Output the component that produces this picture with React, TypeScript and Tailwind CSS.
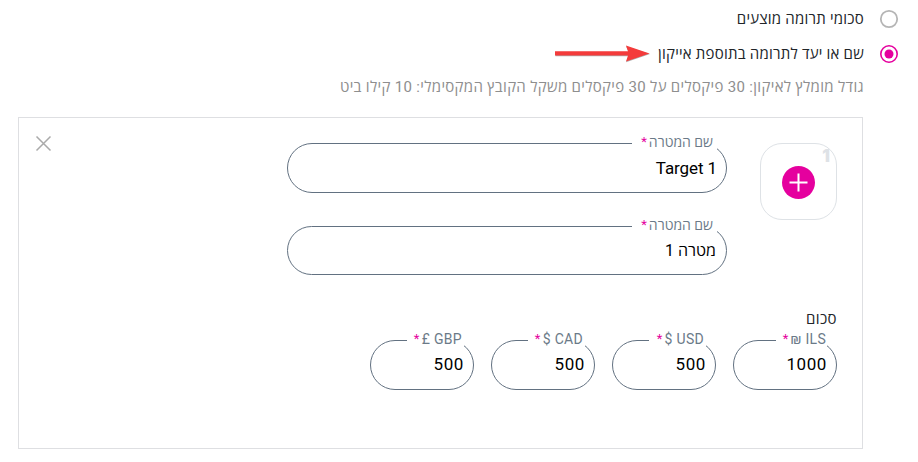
import type { ReactNode } from 'react';

const PINK = 'text-[#e5009e]';

function Radio({ checked }: { checked?: boolean }) {
  return (
    <svg className={`h-5 w-5 shrink-0 ${checked ? PINK : 'text-[#b5b5b5]'}`} viewBox="0 0 20 20" fill="none">
      <circle cx="10" cy="10" r="8.2" stroke="currentColor" strokeWidth={checked ? 1.6 : 1.8} />
      {checked && <circle cx="10" cy="10" r="4.5" fill="currentColor" />}
    </svg>
  );
}

function Arrow() {
  return (
    <svg className="h-5 w-24" viewBox="0 0 96 20">
      <path d="M0.5 8H73.5L71 2.2L95 10L71 18.2L73.5 12.2H0.5Z" fill="#777" opacity="0.6" />
      <path d="M0 7.2H73L71 1.5L94.5 9.5L71 17.5L73 11.6H0Z" fill="#f43b3b" />
    </svg>
  );
}

interface FieldProps {
  label: ReactNode;
  value: string;
  className: string;
  notch: string;
  valueClass: string;
}

function Field({ label, value, className, notch, valueClass }: FieldProps) {
  return (
    <div className={`relative flex items-center rounded-[25px] border border-[#627181] ${className}`}>
      {/* Floating label sits over the outline */}
      <div className={`absolute -top-[10px] right-[9px] flex h-4 items-center gap-[2px] bg-white text-[14px] whitespace-nowrap text-[#6b7a88] ${notch}`}>
        <span>{label}</span>
        <span className={`text-[13px] ${PINK}`}>*</span>
      </div>
      <span dir="auto" className={`leading-5 text-black ${valueClass}`}>{value}</span>
    </div>
  );
}

const currencies = [
  { code: 'ILS', sign: '₪', value: '1000', notch: 'w-[51px] pr-[1px] tracking-[0.3px]' },
  { code: 'USD', sign: '$', value: '500', notch: 'w-[57px] pr-[2px] tracking-[0.3px]' },
  { code: 'CAD', sign: '$', value: '500', notch: 'w-[57px] pr-[2px] tracking-[0.3px]' },
  { code: 'GBP', sign: '£', value: '500', notch: 'w-[57px] pr-[2px] tracking-[0.3px]' },
];

export default function App() {
  return (
    <div dir="rtl" className="h-[462px] w-[918px] overflow-hidden bg-white pt-[9px] font-['Roboto','Open_Sans',sans-serif] text-[#212529]">
      <div className="flex h-5 items-center gap-[15px] pr-[19px] text-[15px] tracking-[0.22px]">
        <Radio />
        <span>סכומי תרומה מוצעים</span>
      </div>

      <div className="mt-[15px] flex h-5 items-center pr-[19px] text-[15px] tracking-[0.23px]">
        <Radio checked />
        <span className="mr-[15px] w-[213px] whitespace-nowrap">שם או יעד לתרומה בתוספת אייקון</span>
        <Arrow />
      </div>

      <p className="mt-[13px] h-5 pr-[54px] text-[15px] leading-5 tracking-[0.32px] text-[#8e8e8e]">
        גודל מומלץ לאיקון: 30 פיקסלים על 30 פיקסלים משקל הקובץ המקסימלי: 10 קילו ביט
      </p>

      <section className="mt-5 mr-[55px] h-[332px] w-[845px] border border-[#dedfe2] px-[17px] pt-[25px]">
        <div className="flex items-start">
          <button className="relative mr-2 flex h-[77px] w-[77px] items-center justify-center rounded-[22px] border border-[#dee2e6] pt-[2px]">
            <span className="absolute top-[4px] right-[6px] font-['Inter'] text-[17px] leading-none font-black text-[#dee2e6]">1</span>
            <svg className="h-[33px] w-[33px]" viewBox="0 0 33 33">
              <circle cx="16.5" cy="16.5" r="16.5" fill="#e5009e" />
              <path d="M16.5 7.5V25.5M7.5 16.5H25.5" stroke="white" strokeWidth="2" />
            </svg>
          </button>

          <div className="mr-[33px] flex flex-col gap-[33px]">
            <Field label="שם המטרה" value="Target 1" className="h-[50px] w-[440px] pr-[9px]" notch="w-[85px] pr-[4px]" valueClass="text-[17px] tracking-[-0.1px]" />
            <Field label="שם המטרה" value="מטרה 1" className="h-[49px] w-[440px] pr-[10px]" notch="w-[85px] pr-[4px]" valueClass="text-[16px]" />
          </div>

          <button className="mt-[-8px] mr-auto -ml-px">
            <svg className="h-[18px] w-[18px]" viewBox="0 0 18 18">
              <path d="M1.5 1.5L15.5 15.5M15.5 1.5L1.5 15.5" stroke="#aaa" strokeWidth="1.5" />
            </svg>
          </button>
        </div>

        <div className="mt-[34px] pr-2">
          <h3 className="h-5 text-[15px] leading-5 tracking-[0.4px]">סכום</h3>
          <div className="mt-[11px] flex gap-[17px]">
            {currencies.map((c) => (
              <Field
                key={c.code}
                label={<span dir="ltr">{c.sign} {c.code}</span>}
                value={c.value}
                className="h-[50px] w-[104px] pr-[9px] pb-[2px]"
                notch={c.notch}
                valueClass="text-[17px] tracking-[0.6px]"
              />
            ))}
          </div>
        </div>
      </section>
    </div>
  );
}
